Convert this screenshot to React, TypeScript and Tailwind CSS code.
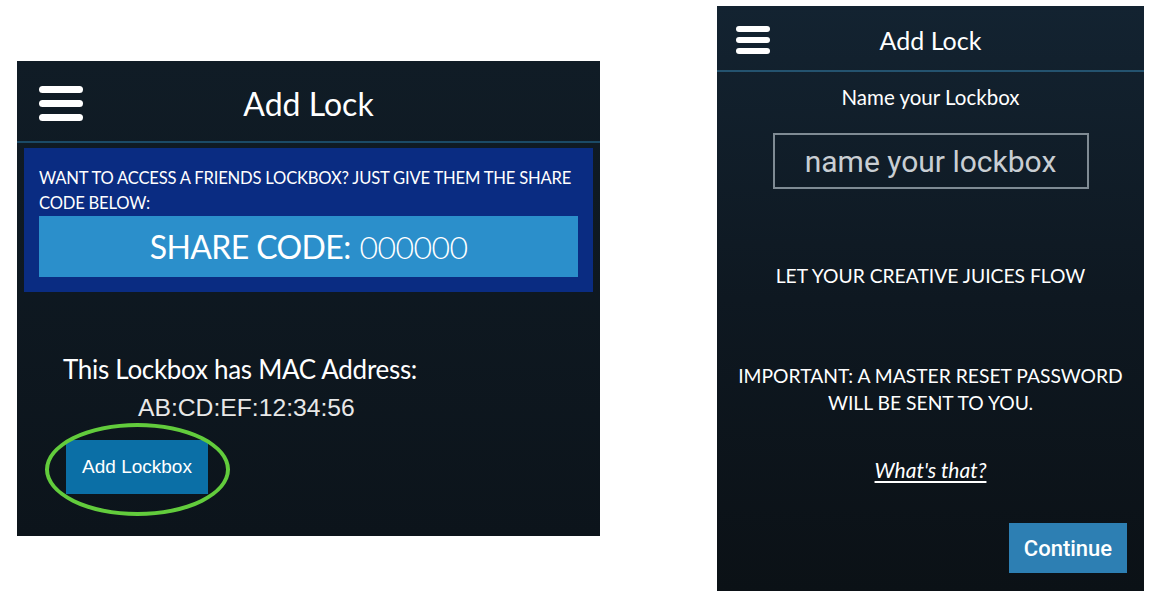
import type React from "react";

const appFont = { fontFamily: "'Lato', 'Open Sans', sans-serif" };

const Hamburger: React.FC<{ w: string; bar: string; gap: string }> = ({ w, bar, gap }) => (
  <div className={`flex flex-col ${gap} ${w}`}>
    <span className={`block ${bar} rounded-sm bg-white`} />
    <span className={`block ${bar} rounded-sm bg-white`} />
    <span className={`block ${bar} rounded-sm bg-white`} />
  </div>
);

const ShareScreen: React.FC = () => (
  <div
    className="mt-[61px] flex h-[475px] w-[583px] flex-col bg-gradient-to-b from-[#101c26] to-[#0c141b] text-white"
    style={appFont}
  >
    <div className="relative flex h-[82px] items-center justify-center border-b-2 border-[#1b4a66]">
      <div className="absolute left-[22px] top-[25px]">
        <Hamburger w="w-[44px]" bar="h-[7px]" gap="gap-[7px]" />
      </div>
      <span className="mt-[6px] text-[32px] leading-none">Add Lock</span>
    </div>

    <div className="mx-[7px] mt-[5px] bg-[#0a2c82] px-[15px] pt-[18px] pb-[15px]">
      <p className="-mr-[6px] text-[16.6px] leading-[25px] tracking-[-0.2px]">
        WANT TO ACCESS A FRIENDS LOCKBOX? JUST GIVE THEM THE SHARE CODE BELOW:
      </p>
      <div className="flex h-[61px] items-center justify-center bg-[#2b8fcb] text-[32px] tracking-[-0.6px]">
        <span>SHARE CODE:</span>
        <span className="ml-[9px] font-light">000000</span>
      </div>
    </div>

    <div className="mt-[59px] flex flex-col pl-[46px]">
      <p className="text-[26px] leading-[36px] tracking-[-0.3px]">This Lockbox has MAC Address:</p>
      <p
        className="ml-[75px] mt-[6px] text-[24.7px] leading-[30px] text-[#e8e8e8]"
        style={{ fontFamily: "'Liberation Sans', Arial, sans-serif" }}
      >
        AB:CD:EF:12:34:56
      </p>
      <div className="relative mt-[17px] w-fit">
        <button
          className="ml-[3px] h-[54px] w-[142px] bg-[#0b6fa6] text-[19px] text-white"
          style={{ fontFamily: "'Liberation Sans', Arial, sans-serif" }}
        >
          Add Lockbox
        </button>
        <span className="pointer-events-none absolute left-[-18px] top-[-17px] h-[93px] w-[185px] rounded-[50%] border-[4px] border-[#62cc3c]" />
      </div>
    </div>
  </div>
);

const NameScreen: React.FC = () => (
  <div
    className="mt-[6px] flex h-[585px] w-[427px] flex-col items-center bg-gradient-to-b from-[#132331] via-[#0e1821] to-[#0b1116] text-white"
    style={appFont}
  >
    <div className="relative flex h-[66px] w-full items-center justify-center border-b-2 border-[#24536f]">
      <div className="absolute left-[19px] top-[20px]">
        <Hamburger w="w-[34px]" bar="h-[6px]" gap="gap-[5px]" />
      </div>
      <span className="mt-[5px] text-[25px] leading-none">Add Lock</span>
    </div>

    <p className="mt-[13px] text-[20.5px] leading-[24px]">Name your Lockbox</p>

    <div
      className="mt-[24px] flex h-[56px] w-[316px] items-center justify-center border-2 border-[#7f8b94] text-[30px] text-[#c9ced3]"
      style={{ fontFamily: "Roboto, sans-serif" }}
    >
      name your lockbox
    </div>

    <p className="mt-[74px] text-[19.3px] leading-[26px]">LET YOUR CREATIVE JUICES FLOW</p>

    <p className="mt-[73px] text-center text-[19.3px] leading-[27px]">
      IMPORTANT: A MASTER RESET PASSWORD
      <br />
      WILL BE SENT TO YOU.
    </p>

    <a className="mt-[41px] text-[21px] italic leading-[26px] underline underline-offset-[3px]">
      What's that?
    </a>

    <div className="mt-[40px] flex w-full justify-end pr-[17px]">
      <button
        className="h-[50px] w-[118px] bg-[#2d7fb3] text-[22px] font-medium text-white"
        style={{ fontFamily: "Roboto, sans-serif" }}
      >
        Continue
      </button>
    </div>
  </div>
);

export default function App() {
  return (
    <div className="flex h-[596px] w-[1153px] items-start gap-[117px] bg-white pl-[17px]">
      <ShareScreen />
      <NameScreen />
    </div>
  );
}
